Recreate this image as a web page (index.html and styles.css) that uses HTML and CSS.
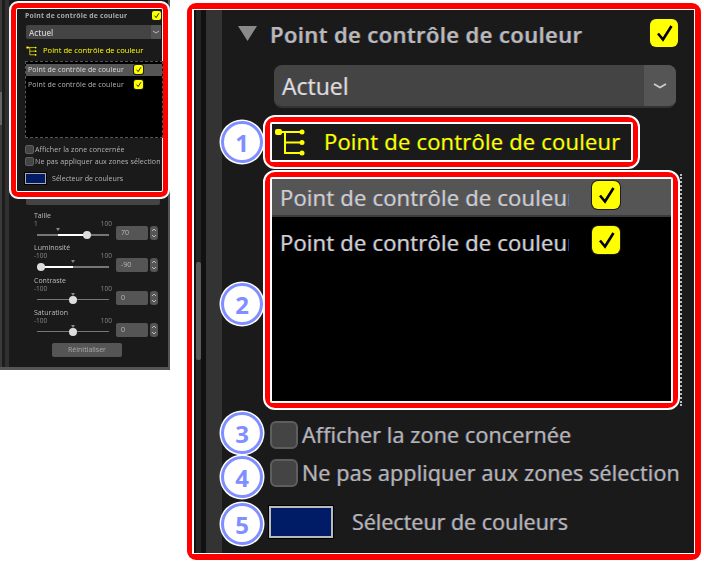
FILE: index.html
```html
<!DOCTYPE html>
<html lang="fr">
<head>
<meta charset="utf-8">
<title>Point de contrôle de couleur</title>
<link rel="stylesheet" href="styles.css">
</head>
<body>
<svg class="defs" width="0" height="0" aria-hidden="true">
  <symbol id="check" viewBox="0 0 28 28"><path d="M8 14.500l5 6 8.500-13.500" fill="none" stroke="#000" stroke-width="2.600"/></symbol>
  <symbol id="tree" viewBox="0 0 32 28" overflow="visible">
    <path d="M5 4H28M11 4V25H28M11 14.500H28" fill="none" stroke="#ff0" stroke-width="2"/>
    <rect x="1" y="1" width="7" height="6" rx="2" fill="#ff0"/>
    <circle cx="28" cy="4" r="2.500" fill="#ff0"/><circle cx="28" cy="14.500" r="2.500" fill="#ff0"/><circle cx="28" cy="25" r="2.500" fill="#ff0"/>
  </symbol>
  <symbol id="spin" viewBox="0 0 8 14"><path d="M2 5l2-2 2 2M2 9l2 2 2-2" fill="none" stroke="#bbb" stroke-width="1"/></symbol>
</svg>
<main class="page">
  <section class="mini">
    <div class="mini-rail"><div class="mini-thumb"></div></div>
    <div class="mini-main">
      <div class="mini-hl">
        <div class="m-head"><span>Point de contrôle de couleur</span><span class="cb on m-cb m-cb-head"><svg><use href="#check"/></svg></span></div>
        <div class="m-select"><span>Actuel</span><b><svg viewBox="0 0 10 6"><path d="M2 2l3 2 3-2" fill="none" stroke="#bbb"/></svg></b></div>
        <div class="m-tool"><svg><use href="#tree"/></svg><span>Point de contrôle de couleur</span></div>
        <div class="m-list">
          <div class="m-row sel"><span>Point de contrôle de couleur</span><span class="cb on m-cb"><svg><use href="#check"/></svg></span></div>
          <div class="m-row"><span>Point de contrôle de couleur</span><span class="cb on m-cb"><svg><use href="#check"/></svg></span></div>
        </div>
        <div class="m-opt m-opt1"><span class="cb off m-cb"></span><span>Afficher la zone concernée</span></div>
        <div class="m-opt"><span class="cb off m-cb"></span><span>Ne pas appliquer aux zones sélection</span></div>
        <div class="m-color"><span class="swatch"></span><span>Sélecteur de couleurs</span></div>
      </div>
      <div class="m-bar"></div>
      <div class="sliders">
        <div class="sl">
          <div class="sl-label">Taille</div>
          <div class="sl-scale"><span>1</span><span>100</span></div>
          <div class="sl-track"><i class="tick" style="left:21px"></i><i class="fill" style="left:21px;width:29px"></i><i class="thumb" style="left:50px"></i></div>
          <div class="sl-val">70</div>
          <div class="sl-spin"><svg><use href="#spin"/></svg></div>
        </div>
        <div class="sl">
          <div class="sl-label">Luminosité</div>
          <div class="sl-scale"><span>-100</span><span>100</span></div>
          <div class="sl-track"><i class="tick" style="left:36px"></i><i class="fill" style="left:4px;width:32px"></i><i class="thumb" style="left:4px"></i></div>
          <div class="sl-val">-90</div>
          <div class="sl-spin"><svg><use href="#spin"/></svg></div>
        </div>
        <div class="sl">
          <div class="sl-label">Contraste</div>
          <div class="sl-scale"><span>-100</span><span>100</span></div>
          <div class="sl-track"><i class="tick" style="left:36px"></i><i class="thumb" style="left:36px"></i></div>
          <div class="sl-val">0</div>
          <div class="sl-spin"><svg><use href="#spin"/></svg></div>
        </div>
        <div class="sl">
          <div class="sl-label">Saturation</div>
          <div class="sl-scale"><span>-100</span><span>100</span></div>
          <div class="sl-track"><i class="tick" style="left:36px"></i><i class="thumb" style="left:36px"></i></div>
          <div class="sl-val">0</div>
          <div class="sl-spin"><svg><use href="#spin"/></svg></div>
        </div>
      </div>
      <div class="m-reset">Réinitialiser</div>
    </div>
  </section>

  <section class="big">
    <div class="big-inner">
      <div class="rail"><div class="rail-a"></div><div class="rail-b"><div class="rail-thumb"></div></div><div class="rail-a"></div><div class="rail-c"></div></div>
      <div class="content">
        <div class="head">
          <svg class="tri" viewBox="0 0 19 15"><path d="M0 0H19L9.500 15Z" fill="#8a8a8a"/></svg>
          <span class="head-text">Point de contrôle de couleur</span>
          <span class="cb on b-cb head-cb"><svg><use href="#check"/></svg></span>
        </div>
        <div class="select"><span class="select-text">Actuel</span><span class="select-btn"><svg viewBox="0 0 14 6"><path d="M1 1l6 3.500 6-3.500" fill="none" stroke="#ccc" stroke-width="1.800"/></svg></span></div>
        <div class="call call-tool">
          <div class="call-in tool"><svg class="tool-ico"><use href="#tree"/></svg><span class="tool-text">Point de contrôle de couleur</span></div>
        </div>
        <div class="call call-list">
          <div class="call-in list">
            <div class="row sel"><span class="row-text">Point de contrôle de couleur</span><span class="cb on b-cb"><svg><use href="#check"/></svg></span></div>
            <div class="row row2"><span class="row-text">Point de contrôle de couleur</span><span class="cb on b-cb"><svg><use href="#check"/></svg></span></div>
          </div>
        </div>
        <div class="opt opt1"><span class="cb off b-cb"></span><span class="opt-text">Afficher la zone concernée</span></div>
        <div class="opt opt2"><span class="cb off b-cb"></span><span class="opt-text">Ne pas appliquer aux zones sélection</span></div>
        <div class="color"><span class="swatch"></span><span class="opt-text">Sélecteur de couleurs</span></div>
        <span class="num n1">1</span>
        <span class="num n2">2</span>
        <span class="num n3">3</span>
        <span class="num n4">4</span>
        <span class="num n5">5</span>
      </div>
    </div>
  </section>
</main>
</body>
</html>
```

FILE: styles.css
```css
* { box-sizing: border-box; }
html, body { margin: 0; background: #fff; }
body { width: 704px; height: 563px; overflow: hidden; font-family: "Open Sans", "Noto Sans", sans-serif; }
.defs { position: absolute; }
.page { display: flex; align-items: flex-start; gap: 17px; }
svg { display: block; }

/* Checkboxes */
.cb { display: block; flex: none; }
.cb svg { width: 100%; height: 100%; }
.cb.on { background: #ff0; box-shadow: 0 0 0 1px #1c1c1c; }
.cb.off { background: #444; border: 2px solid #5e5e5e; }
.b-cb { width: 28px; height: 28px; border-radius: 6px; }
.m-cb { width: 9px; height: 9px; border-radius: 2px; }
.cb.off.m-cb { border-width: 1px; }

.swatch { display: block; flex: none; background: #001c66; box-shadow: 0 0 0 1px #000; }

/* Small overview panel */
.mini { display: flex; flex: none; width: 170px; height: 370px; background: #1a1a1a; border-right: 2px solid #555; border-bottom: 3px solid #555; filter: blur(.4px); }
.mini-rail { flex: none; width: 9px; height: 100%; background: linear-gradient(90deg, #3a3a3a 0 2px, #1d1d1d 2px 5px, #303030 5px); }
.mini-thumb { width: 2px; height: 33px; margin-top: 92px; background: #666; }
.mini-main { flex: none; width: 161px; color: #b5b5b5; font-size: 7px; line-height: 9px; white-space: nowrap; }
.mini-hl { width: 161px; height: 198px; margin-top: 1px; padding: 7px 6px 0 8px; background: #1a1a1a; border: 2px solid #fff; border-radius: 9px; position: relative; box-shadow: inset 0 0 0 5px #f00, inset 0 0 0 6px #fff; overflow: hidden; }
.m-head { display: flex; justify-content: space-between; padding: 1px 0 0; margin-left: 6px; margin-right: 1px; font-weight: 700; font-size: 6.900px; letter-spacing: .18px; color: #aaa; }
.m-select { display: flex; justify-content: space-between; align-items: stretch; height: 14px; margin: 5px 1px 0 7px; background: #444; border-radius: 2px; font-weight: 600; font-size: 8px; line-height: 15px; padding-left: 3px; color: #ccc; }
.m-select b { width: 10px; background: #555; display: flex; align-items: center; }
.m-select svg { width: 10px; height: 6px; }
.m-tool { display: flex; align-items: center; gap: 6px; height: 11px; margin: 6px 0 0 7px; color: #ff0; font-size: 7.600px; }
.m-tool svg { width: 11px; height: 10px; flex: none; }
.m-list { height: 77px; margin: 5px -1px 0 6px; padding-top: 2px; background: #000; border: 1px dashed #555; overflow: hidden; }
.m-row { display: flex; align-items: flex-start; height: 12px; padding-left: 2px; margin-bottom: 3px; }
.m-row span:first-child { width: 97px; overflow: hidden; font-size: 7px; letter-spacing: .12px; line-height: 12px; }
.m-row .m-cb { margin: 1px 0 0 9px; }
.m-row.sel { background: #555; color: #ddd; }
.m-opt { display: flex; align-items: center; gap: 1px; height: 9px; margin: 3px -2px 0 6px; overflow: hidden; font-size: 7.100px; letter-spacing: .08px; }
.m-opt1 { margin-top: 7px; }
.m-color { display: flex; align-items: center; gap: 6px; margin: 7px 0 0 6px; font-size: 7.100px; }
.m-color .swatch { width: 21px; height: 11px; border: 1px solid #aaa; }
.m-bar { width: 134px; height: 6px; margin-left: 17px; background: #444; border-radius: 0 0 2px 2px; }
.sliders { margin: 6px 0 0 25px; }
.sl { display: grid; grid-template-columns: 82px 32px 8px; column-gap: 0; grid-template-rows: 9px 6px 14px; height: 32.330px; }
.sl-label { grid-column: 1 / 4; font-size: 7px; color: #bdbdbd; }
.sl-scale { grid-column: 1; grid-row: 2; width: 78px; display: flex; justify-content: space-between; font-size: 6.500px; line-height: 8px; color: #888; }
.sl-track { grid-column: 1; grid-row: 3; position: relative; width: 72px; margin-left: 3px; }
.sl-track::before { content: ""; position: absolute; left: 0; right: 0; top: 8px; height: 1.500px; background: #777; }
.sl-track i { position: absolute; display: block; }
.tick { top: 2px; width: 0; height: 0; margin-left: -2.500px; border: 2.500px solid transparent; border-top: 3px solid #888; border-bottom: 0; }
.fill { top: 7.500px; height: 2px; background: #fff; }
.thumb { top: 5px; width: 8px; height: 8px; margin-left: -4px; border-radius: 50%; background: #ddd; }
.sl-val { grid-column: 2; grid-row: 3; background: #555; border-radius: 2px; padding-left: 5px; font-size: 7px; line-height: 14px; color: #bbb; }
.sl-spin { grid-column: 3; grid-row: 3; width: 8px; margin-left: 2px; background: #555; border-radius: 3px; }
.sl-spin svg { width: 8px; height: 14px; }
.m-reset { width: 70px; height: 14px; margin: 3px 0 0 43px; background: #555; border-radius: 2px; text-align: center; font-size: 7px; line-height: 14px; color: #aaa; }

/* Zoomed callout panel */
.big { flex: none; width: 514px; height: 557px; margin-top: 3px; border: 6px solid #f00; border-left-width: 5px; border-radius: 9px; background: #1a1a1a; }
.big-inner { display: flex; height: 100%; border: solid #fff; border-width: 1px 1px 1px 2px; }
.rail { flex: none; display: flex; width: 28px; }
.rail-a { width: 2px; background: #111; }
.rail-a:nth-child(3) { width: 5px; }
.rail-b { width: 5px; background: #242424; }
.rail-thumb { height: 98px; margin-top: 252px; background: #5a5a5a; border-radius: 2px; }
.rail-c { flex: 1; background: #333; }
.content { flex: 1; position: relative; color: #c4c4c4; white-space: nowrap; }
.head { display: flex; align-items: center; height: 28px; margin-top: 9px; padding-left: 16px; }
.tri { width: 19px; height: 15px; flex: none; margin-right: 13px; }
.head-text { padding-top: 2px; font-size: 22px; letter-spacing: .42px; font-weight: 600; line-height: 30px; color: #b9b9b9; text-shadow: -.6px 0 rgba(70,140,255,.55), .6px 0 rgba(255,150,60,.45); }
.head-cb { margin-left: auto; margin-right: 16px; }
.select { display: flex; justify-content: space-between; width: 402px; height: 43px; margin: 18px 0 0 52px; background: #444; border-radius: 8px; border-bottom: 2px solid #333; overflow: hidden; }
.select-text { padding-left: 8px; font-size: 23px; line-height: 43px; color: #ddd; text-shadow: -.6px 0 rgba(70,140,255,.6), .6px 0 rgba(255,150,60,.5); }
.select-btn { display: flex; align-items: center; justify-content: center; width: 32px; background: #555; }
.select-btn svg { width: 14px; height: 6px; }
.call { position: relative; border: 2px solid #fff; border-radius: 12px; background: #f00; padding: 5px; }
.call-in { background: #1a1a1a; border: 2px solid #fff; }
.call-tool { width: 377px; height: 54px; margin: 7px 0 0 41px; }
.tool { display: flex; align-items: center; height: 100%; padding: 0 0 2px 2px; border-radius: 2px; }
.tool-ico { width: 32px; height: 28px; flex: none; margin: 2px 18px 0 0; }
.tool-text { font-size: 22px; letter-spacing: .2px; color: #ff0; text-shadow: -.5px 0 rgba(0,200,80,.6), .5px 0 rgba(255,80,0,.6); }
.call-list { width: 417px; height: 240px; margin: 1px 0 0 41px; }
.call-list::after { content: ""; position: absolute; top: 2px; bottom: 2px; right: -4px; border-right: 2px dotted #bbb; }
.list { height: 100%; background: #000; border-radius: 2px; overflow: hidden; }
.row { display: flex; align-items: flex-start; height: 38px; padding: 0 0 0 8px; }
.row.sel { background: #555; border-bottom: 2px solid #3a3a3a; }
.row2 { margin-top: 7px; }
.row-text { width: 289px; overflow: hidden; font-size: 22px; letter-spacing: .2px; line-height: 36px; color: #cfcfcf; text-shadow: -.6px 0 rgba(70,140,255,.6), .6px 0 rgba(255,150,60,.5); }
.row .cb { margin: 2px 0 0 23px; }
.opt { display: flex; align-items: center; gap: 4px; height: 28px; margin-left: 48px; }
.opt1 { margin-top: 11px; }
.opt2 { margin-top: 10px; }
.opt-text { font-size: 21.500px; letter-spacing: .16px; line-height: 30px; color: #b5b5b5; text-shadow: -.6px 0 rgba(70,140,255,.55), .6px 0 rgba(255,150,60,.45); }
.color { display: flex; align-items: center; gap: 19px; height: 32px; margin: 19px 0 0 47px; }
.color .opt-text { letter-spacing: 0; }
.color .swatch { width: 64px; height: 32px; border: 2px solid #bbb; }
.num { position: absolute; left: -1px; width: 42px; height: 42px; border-radius: 50%; background: #fff; border: 3.500px solid #7f8fff; box-shadow: 0 0 0 1.500px #fff; display: flex; align-items: center; justify-content: center; font-family: "Noto Sans", sans-serif; font-size: 24px; font-weight: 700; color: #7f8fff; }
.n1 { top: 111px; }
.n2 { top: 273px; }
.n3 { top: 402px; }
.n4 { top: 446px; }
.n5 { top: 493px; }
```
